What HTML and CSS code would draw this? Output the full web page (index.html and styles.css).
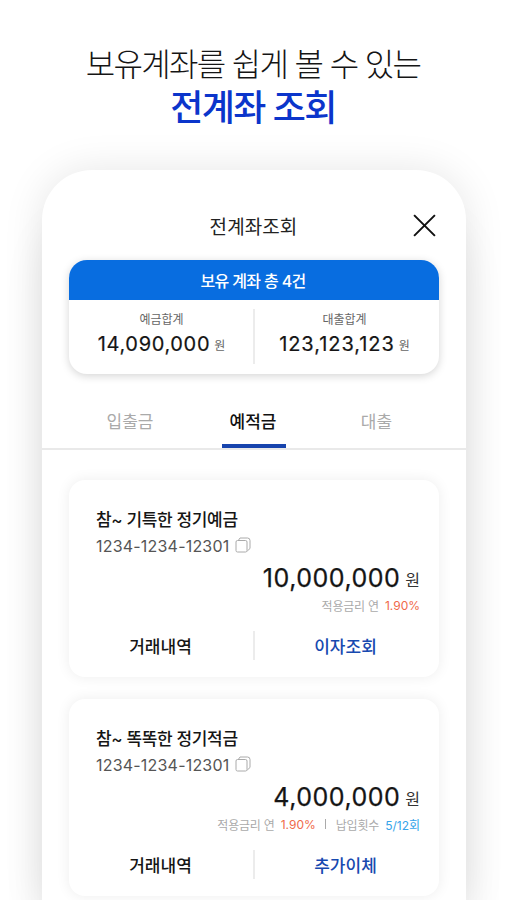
FILE: index.html
```html
<!DOCTYPE html>
<html lang="ko">
<head>
<meta charset="utf-8">
<title>전계좌 조회</title>
<link rel="stylesheet" href="styles.css">
</head>
<body>
<header class="promo">
  <p class="promo-lead">보유계좌를 쉽게 볼 수 있는</p>
  <h1 class="promo-title">전계좌 조회</h1>
</header>
<main class="phone">
  <div class="titlebar">
    <h2 class="screen-title">전계좌조회</h2>
    <svg class="close" viewBox="0 0 24 24"><path d="M2 2L22 22M22 2L2 22"/></svg>
  </div>
  <section class="summary">
    <div class="summary-head">보유 계좌 총 4건</div>
    <div class="summary-body">
      <div class="total"><span class="total-label">예금합계</span><div class="total-value"><span class="num">14,090,000</span><span class="won">원</span></div></div>
      <div class="total"><span class="total-label">대출합계</span><div class="total-value"><span class="num">123,123,123</span><span class="won">원</span></div></div>
    </div>
  </section>
  <nav class="tabs">
    <span class="tab">입출금</span>
    <span class="tab active">예적금</span>
    <span class="tab">대출</span>
  </nav>
  <div class="accounts">
    <article class="account">
      <h3 class="name">참~ 기특한 정기예금</h3>
      <div class="number"><span>1234-1234-12301</span><svg class="copy" viewBox="0 0 16 16"><rect x="1" y="3.5" width="11" height="11.5" rx="1.5"/><path d="M3.5 3.2L5 1H12.5Q15 1 15 3.5V11.5L12.3 14"/></svg></div>
      <div class="balance"><span class="num">10,000,000</span><span class="won">원</span></div>
      <div class="detail"><span class="detail-label">적용금리 연</span><span class="rate">1.90%</span></div>
      <div class="actions"><span class="action">거래내역</span><span class="action primary">이자조회</span></div>
    </article>
    <article class="account">
      <h3 class="name">참~ 똑똑한 정기적금</h3>
      <div class="number"><span>1234-1234-12301</span><svg class="copy" viewBox="0 0 16 16"><rect x="1" y="3.5" width="11" height="11.5" rx="1.5"/><path d="M3.5 3.2L5 1H12.5Q15 1 15 3.5V11.5L12.3 14"/></svg></div>
      <div class="balance"><span class="num">4,000,000</span><span class="won">원</span></div>
      <div class="detail"><span class="detail-label">적용금리 연</span><span class="rate">1.90%</span><span class="bar"></span><span class="detail-label">납입횟수</span><span class="count">5/12회</span></div>
      <div class="actions"><span class="action">거래내역</span><span class="action primary">추가이체</span></div>
    </article>
  </div>
</main>
</body>
</html>
```

FILE: styles.css
```css
* { box-sizing: border-box; }
body {
  margin: 0;
  height: 900px;
  overflow: hidden;
  background: #fff;
  color: #151515;
  font-family: Inter, "Noto Sans CJK KR", sans-serif;
  white-space: nowrap;
}
h1, h2, h3, p { margin: 0; }
.promo { height: 170px; padding-top: 43px; text-align: center; }
.promo-lead { font-size: 32px; font-weight: 300; line-height: 44px; letter-spacing: -1.7px; }
.promo-title { font-size: 36px; font-weight: 500; line-height: 42px; letter-spacing: -1.6px; color: #0b35cb; }
.phone {
  width: 424px;
  height: 730px;
  margin-left: 42px;
  border-radius: 50px 50px 0 0;
  background: #fff;
  box-shadow: 0 50px 40px rgba(0, 0, 0, .08), 0 0 40px rgba(0, 0, 0, .1);
}
.titlebar { display: flex; justify-content: center; align-items: center; height: 90px; padding: 25px 29px 0 28px; position: relative; }
.screen-title { font-size: 19px; font-weight: 400; line-height: 28px; letter-spacing: .1px; color: #222; }
.close { position: absolute; right: 29px; top: 43px; width: 25px; height: 25px; fill: none; stroke: #111; stroke-width: 1.9; }
.summary { width: 370px; height: 114px; margin-left: 27px; border-radius: 18px; overflow: hidden; box-shadow: 0 2px 8px rgba(0, 0, 0, .17); }
.summary-head { height: 40px; padding-right: 2px; background: #086de0; color: #fff; text-align: center; font-size: 16px; font-weight: 500; line-height: 42px; letter-spacing: -.65px; }
.summary-body { display: grid; grid-template-columns: 185px 185px; height: 74px; background: linear-gradient(#ececec, #ececec) 184px 9px / 2px 55px no-repeat; }
.total { display: flex; flex-direction: column; align-items: center; padding-top: 11px; }
.total:last-child { padding-right: 4px; }
.total-label { font-size: 12px; line-height: 18px; color: #666; letter-spacing: -.1px; }
.total-value { display: flex; align-items: baseline; gap: 4px; line-height: 31px; }
.total-value .num { font-size: 20px; font-weight: 400; letter-spacing: .65px; -webkit-text-stroke: .2px #151515; }
.total:last-child .num { letter-spacing: .95px; }
.total-value .won { font-size: 12px; color: #666; position: relative; top: -1px; }
.tabs { display: grid; grid-template-columns: 64px 64px 64px; justify-content: center; column-gap: 60px; height: 76px; padding-top: 32px; border-bottom: 2px solid #e9e9e9; }
.tab { height: 42px; text-align: center; font-size: 17px; line-height: 32px; color: #aaa; }
.tab:last-child { padding-right: 3px; }
.tab.active { padding-right: 2px; color: #111; font-weight: 500; border-bottom: 4px solid #1744ad; }
.accounts { display: grid; row-gap: 22px; padding: 30px 28px 0 27px; }
.account { height: 197px; padding: 26px 18px 0 27px; border-radius: 16px; box-shadow: 0 0 14px rgba(0, 0, 0, .075); }
.name { font-size: 17px; font-weight: 500; line-height: 28px; letter-spacing: -.35px; }
.number { display: flex; align-items: center; gap: 6px; height: 24px; font-size: 16px; letter-spacing: .2px; color: #555; }
.copy { width: 16px; height: 16px; position: relative; top: -1px; fill: none; stroke: #aaa; stroke-width: 1; }
.balance { display: flex; justify-content: flex-end; align-items: baseline; gap: 5px; height: 37px; padding-right: 1px; line-height: 40px; }
.balance .num { font-size: 25px; font-weight: 400; letter-spacing: .5px; -webkit-text-stroke: .25px #151515; }
.balance .won { font-size: 16px; color: #333; position: relative; top: -1px; }
.detail { display: flex; justify-content: flex-end; align-items: center; height: 20px; padding-right: 1px; font-size: 12px; color: #aaa; }
.detail-label { letter-spacing: -.2px; }
.rate { margin-left: 6px; color: #f06a4a; }
.count { margin-left: 6px; color: #36a4ea; }
.bar { width: 1px; height: 10px; margin: 0 10px 0 9px; background: #aaa; }
.actions { display: grid; grid-template-columns: 183px 187px; height: 30px; margin: 16px -18px 0 -27px; background: linear-gradient(#ececec, #ececec) 184px 0 / 2px 29px no-repeat; }
.action { text-align: center; font-size: 17px; font-weight: 500; line-height: 32px; }
.action.primary { color: #1749b0; }
```
